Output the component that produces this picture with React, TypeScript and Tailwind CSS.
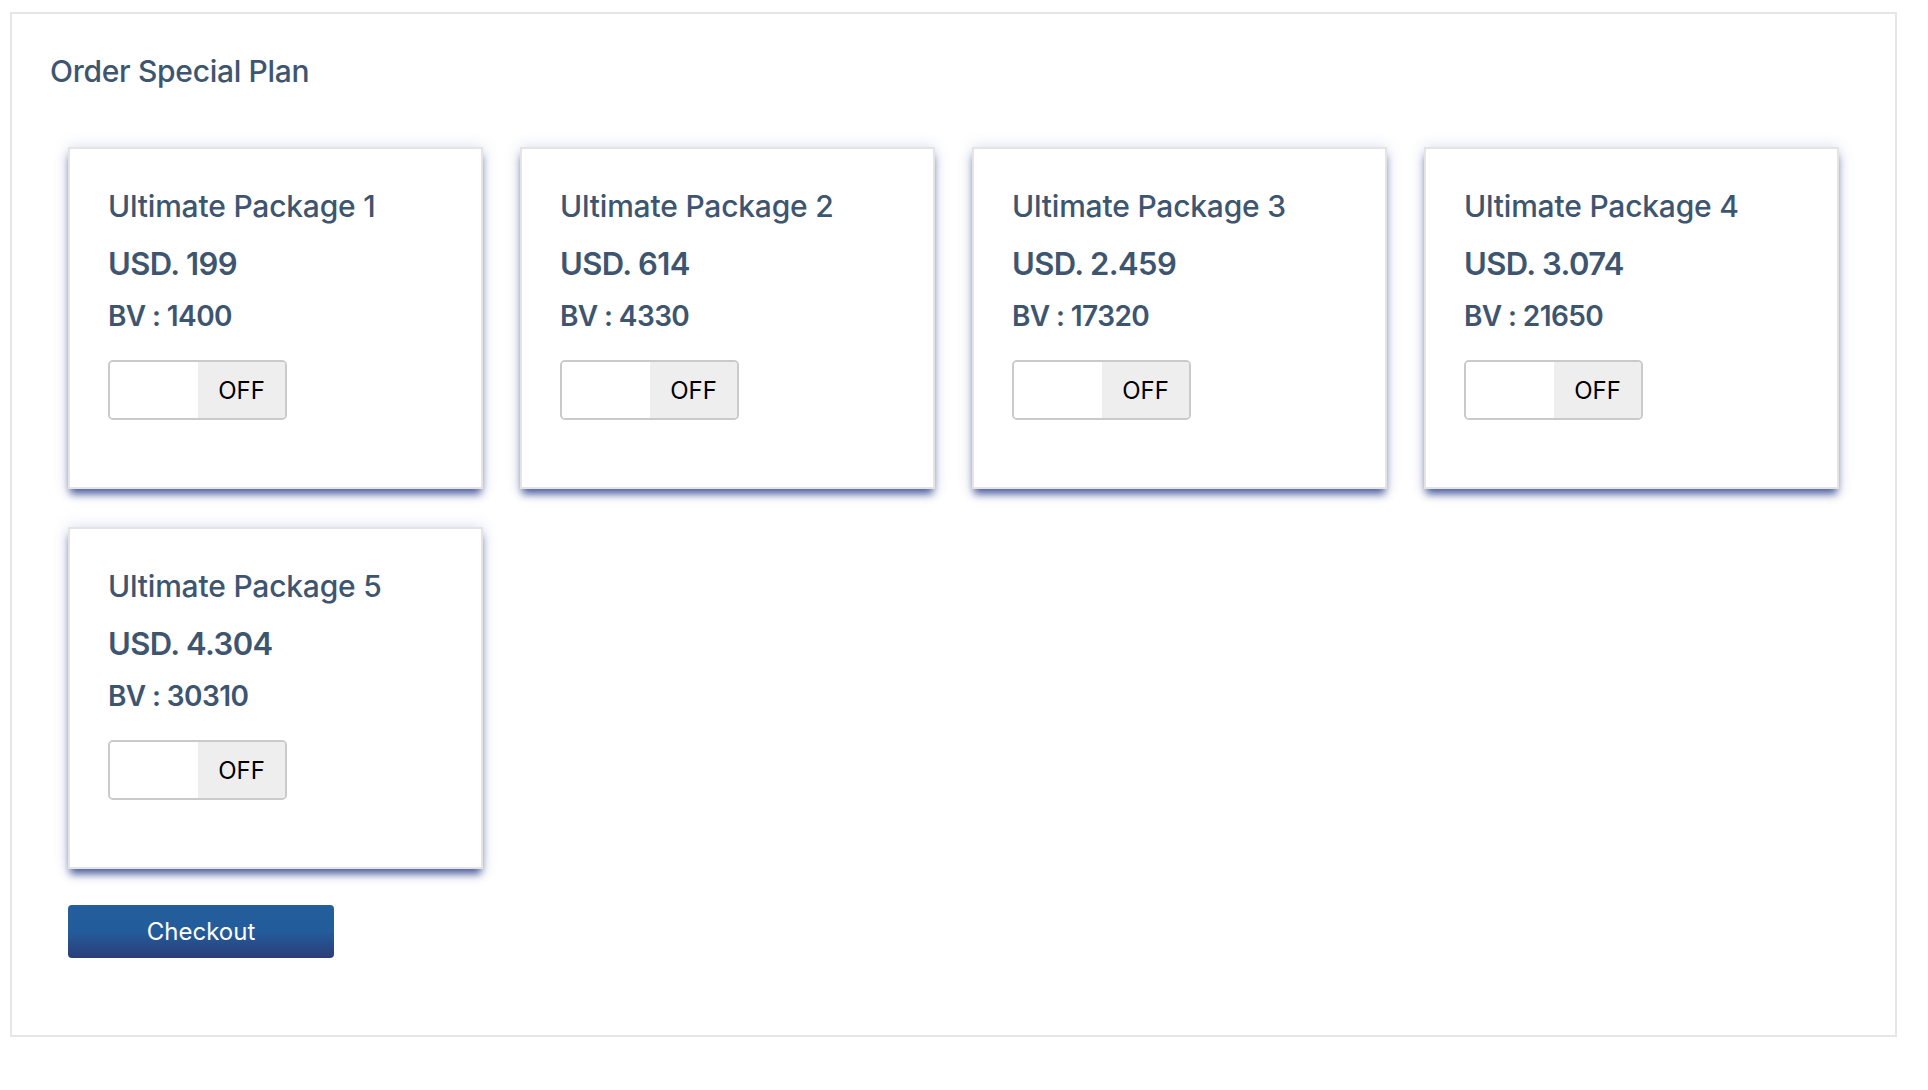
import React from "react";

const packages = [
  { name: "Ultimate Package 1", price: "USD. 199", bv: "BV : 1400" },
  { name: "Ultimate Package 2", price: "USD. 614", bv: "BV : 4330" },
  { name: "Ultimate Package 3", price: "USD. 2.459", bv: "BV : 17320" },
  { name: "Ultimate Package 4", price: "USD. 3.074", bv: "BV : 21650" },
  { name: "Ultimate Package 5", price: "USD. 4.304", bv: "BV : 30310" },
];

function Card({ name, price, bv }: { name: string; price: string; bv: string }) {
  return (
    <div className="h-[342px] w-[415px] border-2 border-[#e4e4e4] bg-white pl-[38px] pt-[37px] shadow-[0_7px_8px_-2px_rgba(40,60,135,0.8),0_0_14px_rgba(70,90,170,0.2)]">
      <div className="text-[30px] font-medium leading-[40px] tracking-[-0.2px] text-[#3e5570]">{name}</div>
      <div className="mt-[18px] text-[31px] font-semibold leading-[40px] tracking-[-0.6px] text-[#3e5570]">{price}</div>
      <div className="mt-[12px] text-[28px] font-semibold leading-[40px] tracking-[-0.6px] text-[#3e5570]">{bv}</div>
      <div className="mt-[24px] flex h-[60px] w-[179px] overflow-hidden rounded-[5px] border-2 border-[#cacaca]">
        <div className="w-[88px] bg-white" />
        <div className="flex flex-1 items-center justify-center bg-[#eeeeee] pt-[2px] text-[24px] text-black">OFF</div>
      </div>
    </div>
  );
}

export default function App() {
  return (
    <div className="min-h-[1090px] bg-white pl-[10px] pt-[12px] font-['Inter',sans-serif]">
      <div className="h-[1025px] w-[1887px] border-2 border-[#e6e6e6] bg-white">
        <div className="pl-[38px] pt-[37px] text-[30px] font-medium leading-[40px] tracking-[-0.3px] text-[#3e5570]">
          Order Special Plan
        </div>
        <div className="mt-[56px] pl-[56px]">
          <div className="grid grid-cols-[repeat(4,415px)] gap-x-[37px] gap-y-[38px]">
            {packages.map((p) => (
              <Card key={p.name} {...p} />
            ))}
          </div>
          <button className="mt-[36px] flex h-[53px] w-[266px] items-center justify-center rounded-[4px] bg-[linear-gradient(to_bottom,#245e9c_0%,#235c9b_50%,#2a3e79_100%)] text-[24px] text-white">
            Checkout
          </button>
        </div>
      </div>
    </div>
  );
}
